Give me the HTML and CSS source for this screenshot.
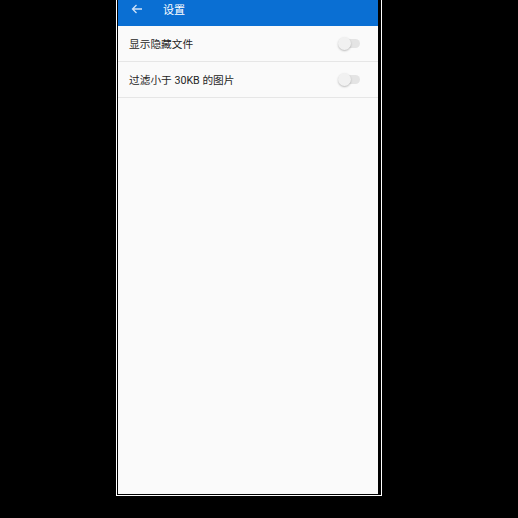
FILE: index.html
```html
<!DOCTYPE html>
<html>
<head>
<meta charset="utf-8">
<link rel="stylesheet" href="styles.css">
</head>
<body>
<div class="frame">
  <div class="screen">
    <div class="appbar">
      <svg class="back" width="12" height="10" viewBox="0 0 12 10"><path d="M11 5H1.5M5.5 1L1.5 5l4 4" fill="none" stroke="#cfe2f8" stroke-width="1.3"/></svg>
      <span class="title">设置</span>
    </div>
    <div class="list">
      <div class="row"><span class="label">显示隐藏文件</span><span class="switch"><span class="thumb"></span></span></div>
      <div class="row"><span class="label">过滤小于 30KB 的图片</span><span class="switch"><span class="thumb"></span></span></div>
    </div>
  </div>
</div>
</body>
</html>
```
FILE: styles.css
```css
html, body { margin: 0; padding: 0; background: #000; }
body { width: 518px; height: 518px; font-family: Roboto, "Noto Sans CJK SC", sans-serif; }
.frame {
  margin-left: 116px;
  width: 262px;
  height: 494px;
  border: 1px solid #fff;
  border-top: none;
  padding: 0 1px 1px 1px;
  background: #000;
}
.screen { width: 260px; height: 494px; background: #fafafa; }
.appbar {
  height: 26px; background: #0a6fd3;
  display: flex; align-items: center;
  padding-left: 13px; box-sizing: border-box;
  padding-bottom: 8px;
}
.back { display: block; }
.title { color: #fff; font-size: 11px; margin-left: 20px; }
.row {
  height: 35px; border-bottom: 1px solid #e6e6e6;
  display: flex; align-items: center; justify-content: space-between;
  padding: 0 18px 0 11px;
}
.label { font-size: 10.7px; color: #262626; }
.switch {
  position: relative; width: 19px; height: 9px; border-radius: 5px;
  background: #e4e4e4;
}
.thumb {
  position: absolute; left: -3px; top: -2px; width: 13px; height: 13px;
  border-radius: 50%; background: #f1f1f1;
  box-shadow: 0 1px 2px rgba(0,0,0,0.25);
}
```
